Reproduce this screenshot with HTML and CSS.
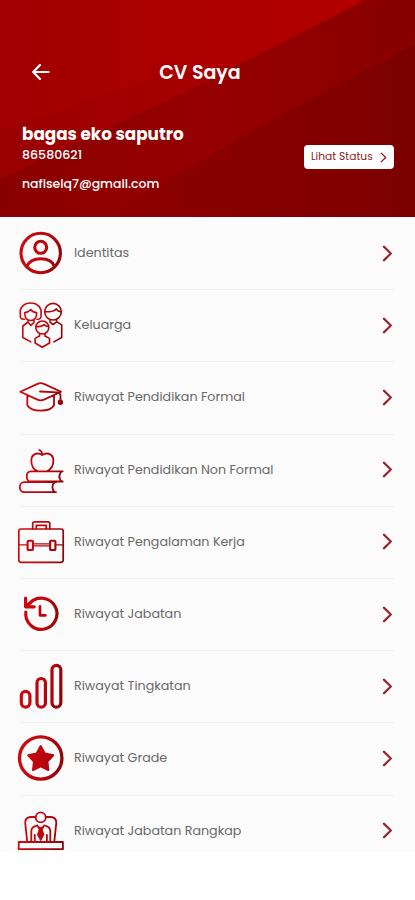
FILE: index.html
```html
<!DOCTYPE html>
<html lang="id">
<head>
<meta charset="utf-8">
<meta name="viewport" content="width=device-width, initial-scale=1">
<title>CV Saya</title>
<link rel="stylesheet" href="styles.css">
</head>
<body>
<svg class="defs" width="0" height="0" aria-hidden="true">
  <defs>
    <linearGradient id="red" gradientUnits="userSpaceOnUse" x1="2" y1="20" x2="46" y2="28">
      <stop offset="0" stop-color="#d00910"/><stop offset=".6" stop-color="#b8060c"/><stop offset="1" stop-color="#8a0508"/>
    </linearGradient>
    <symbol id="next" viewBox="0 0 12 18"><path d="M2 1.5 9.7 9 2 16.5"/></symbol>
  </defs>
</svg>
<header class="hero">
  <svg class="hero-bg" viewBox="0 0 415 217" preserveAspectRatio="none" aria-hidden="true">
    <defs>
      <linearGradient id="g1" x1="0" y1="0" x2="1" y2="0"><stop offset="0" stop-color="#a00000"/><stop offset=".45" stop-color="#ad0000"/><stop offset="1" stop-color="#b40000"/></linearGradient>
      <linearGradient id="g2" x1="0" y1="0" x2="1" y2="0"><stop offset="0" stop-color="#8a0000"/><stop offset=".5" stop-color="#960000"/><stop offset="1" stop-color="#880000"/></linearGradient>
      <linearGradient id="g3" gradientUnits="userSpaceOnUse" x1="100" y1="0" x2="415" y2="0"><stop offset="0" stop-color="#900000"/><stop offset="1" stop-color="#7c0000"/></linearGradient>
      <linearGradient id="g4" x1="0" y1="0" x2="1" y2="0"><stop offset="0" stop-color="#990000"/><stop offset="1" stop-color="#aa0000"/></linearGradient>
    </defs>
    <path fill="url(#g1)" d="M0 0H415V217H0z"/>
    <path fill="url(#g4)" d="M0 131 155 78 240 63 0 180z"/>
    <path fill="url(#g2)" d="M0 179 118 123 205 82 365 0H415V217H0z"/>
    <path fill="url(#g3)" d="M100 217 180 172 300 105 415 44V217z"/>
  </svg>
  <div class="bar">
    <svg class="back" viewBox="0 0 20 18"><path d="M17.6 9H2.4M9 2 2.2 9 9 16"/></svg>
    <h1>CV Saya</h1>
  </div>
  <div class="profile">
    <div class="person">
      <div class="name">bagas eko saputro</div>
      <div class="nik">86580621</div>
      <div class="mail">nafiselq7@gmail.com</div>
    </div>
    <div class="status"><span>Lihat Status</span><svg viewBox="0 0 12 18"><use href="#next"/></svg></div>
  </div>
</header>
<main class="list">
  <div class="row"><svg class="icon" viewBox="0 0 48 48"><g stroke-width="3.1"><circle cx="23.7" cy="24" r="19.7"/><circle cx="23.7" cy="18.3" r="6"/><path d="M9.8 37.5C12 32 17 29.7 23.7 29.7S35.5 32 37.6 37.5"/></g></svg><span>Identitas</span><svg class="next" viewBox="0 0 12 18"><use href="#next"/></svg></div>
  <div class="row"><svg class="icon" viewBox="0 0 48 48"><g stroke-width="1.6"><path d="M7.5 18.3C4 18.5 2.8 16.8 3.4 13.8 2 6.5 7 2 13.7 2S25.2 6.5 24 13.8c.5 3-.7 4.5-4.1 4.5"/><path d="M7.7 11.5c4.2 0 5-2 6-3 1.2 1.8 3 3 6 3 0 5-2.3 8-6 8s-6-3-6-8zM11 19v2.5l3 2.8 3-2.8V19M10.5 21.5 5.8 25v11.5l8 4.4"/><circle cx="36" cy="10.7" r="8.3"/><path d="M28 10.8c4 0 10-.4 11.2-3 1 1.8 2.5 2.8 5 3M33 18.8v2.4l3 2.3 3.5-2.3v-2.9M40 20.8l4.7 3v12.7l-7.8 4.4"/><circle cx="25.3" cy="26.5" r="6.5"/><path d="M19 25.5c5.3.5 7-.4 8-2 1 1.3 2.3 2 4.5 2M22.5 33v2l-4.4 2.4V42l7.2 4.2 7.2-4.2v-4.6L28 35v-2"/></g></svg><span>Keluarga</span><svg class="next" viewBox="0 0 12 18"><use href="#next"/></svg></div>
  <div class="row"><svg class="icon" viewBox="0 0 48 48"><g stroke-width="1.8"><path d="M3.3 18.8 20.5 10.9q3.2-1.6 6.4 0L44 18.8 27 26.6q-3.3 1.5-6.6 0zM10.3 22.5v9.8C12.5 36 18 37.7 23.7 37.7S35 36 37 32.3v-9.8M23 18.5l17.3.8q3.2.5 3.2 3.5v4"/><circle class="solid" cx="43.4" cy="29.2" r="1.8"/></g></svg><span>Riwayat Pendidikan Formal</span><svg class="next" viewBox="0 0 12 18"><use href="#next"/></svg></div>
  <div class="row"><svg class="icon" viewBox="0 0 48 48"><g stroke-width="1.8"><path d="M20.3 25c-4.8-2.3-6-6.2-6-10.3 0-6.5 5.8-9 10.9-5.7 5.2-3.3 11.2-.8 11.2 5.7 0 4.1-1.5 8-6.2 10.3M25.2 9c0-3-.8-4.3-3-5M45.7 25.3H13.8c-5.4 0-5.4 10.2 0 10.2h31.9M44.5 25.5c-3 3.5-3 6.7 0 10M39 36.2H7.3c-6 0-6 10 0 10H39M37.5 36.2c-2.8 3.2-2.8 6.7 0 10"/></g></svg><span>Riwayat Pendidikan Non Formal</span><svg class="next" viewBox="0 0 12 18"><use href="#next"/></svg></div>
  <div class="row"><svg class="icon" viewBox="0 0 48 48"><g stroke-width="1.7"><rect x="1.8" y="11" width="44.4" height="33.3" rx="2.2"/><path d="M15.7 11V5.8q0-2 2-2h13.1q2 0 2 2V11M19.3 10.5V7.4h10v3.1"/><path stroke-width="1.2" d="M2 26.8h8.2M16.3 25.8h16.5M16.3 27.9h16.5M38.8 26.8H46"/><g stroke-width="2.1"><rect x="10.6" y="22.7" width="5.3" height="9.3" rx=".8"/><rect x="33.1" y="22.7" width="5.3" height="9.3" rx=".8"/></g></g></svg><span>Riwayat Pengalaman Kerja</span><svg class="next" viewBox="0 0 12 18"><use href="#next"/></svg></div>
  <div class="row"><svg class="icon" viewBox="0 0 48 48"><g stroke-width="3.2"><path d="M8.8 22.2A15.6 15.6 0 1 0 12.5 13.6M8.6 8.2v8.6h8.6M9.5 16 15 11.2"/><path d="M23 16.3v9h5.4" stroke-width="2.7"/></g></svg><span>Riwayat Jabatan</span><svg class="next" viewBox="0 0 12 18"><use href="#next"/></svg></div>
  <div class="row"><svg class="icon" viewBox="0 0 48 48"><g stroke-width="3.2"><rect x="4.3" y="29.3" width="8.6" height="15.8" rx="4.3"/><rect x="20" y="16.5" width="8.4" height="28.6" rx="4.2"/><rect x="35" y="3.3" width="8.8" height="41.8" rx="4.4"/></g></svg><span>Riwayat Tingkatan</span><svg class="next" viewBox="0 0 12 18"><use href="#next"/></svg></div>
  <div class="row"><svg class="icon" viewBox="0 0 48 48"><circle cx="23.7" cy="24" r="21.2" stroke-width="3.3"/><path class="solid" d="m23.7 12 4.1 7.5 8.4 1.7-5.8 6.3 1 8.5-7.7-3.7L16 36l1-8.5-5.8-6.3 8.4-1.7z" stroke-width="2"/></svg><span>Riwayat Grade</span><svg class="next" viewBox="0 0 12 18"><use href="#next"/></svg></div>
  <div class="row"><svg class="icon" viewBox="0 0 48 48"><g stroke-width="1.8"><rect x="1.7" y="35" width="44.2" height="7.2"/><circle cx="23.7" cy="10.4" r="5"/><path d="M18.5 10h-5.3q-5 .8-5 5.7l2 19M29 10h5.3q5 .8 5 5.7l-2 19M14.3 35V24c0-3.3 2.4-5 6.2-5.7M33.3 35V24c0-3.3-2.4-5-6.2-5.7M17.8 34.5V28M29.9 34.5V28"/></g><path class="solid" d="m20 18.8 3.7 1.7 3.7-1.7-2 4 1.6 5-3.3 6-3.3-6 1.6-5z" stroke-width=".8"/></svg><span>Riwayat Jabatan Rangkap</span><svg class="next" viewBox="0 0 12 18"><use href="#next"/></svg></div>
</main>
</body>
</html>
```
FILE: styles.css
```css
* { box-sizing: border-box; }
body {
  margin: 0;
  background: #fff;
  font-family: Poppins, Inter, "Liberation Sans", sans-serif;
  color: #686868;
}
svg { display: block; fill: none; stroke-linecap: round; stroke-linejoin: round; flex: none; }
.defs { position: absolute; }
.hero { position: relative; height: 217px; color: #fff; overflow: hidden; }
.hero-bg { position: absolute; inset: 0; width: 100%; height: 100%; }
.bar {
  position: relative;
  display: grid;
  grid-template-columns: 20px 1fr 20px;
  align-items: center;
  padding: 57px 46px 0 31px;
  height: 87px;
}
.back { width: 20px; height: 18px; stroke: #fff; stroke-width: 2.2; }
h1 { margin: 0; padding-top: 2px; text-align: center; font-size: 19px; line-height: 28px; font-weight: 600; }
.profile {
  position: relative;
  display: flex;
  justify-content: space-between;
  padding: 36px 21px 0 22px;
}
.name { font-size: 16.8px; line-height: 22px; font-weight: 700; }
.nik { margin-top: 1px; font-size: 12.6px; line-height: 18px; font-weight: 500; }
.mail { margin-top: 11px; font-size: 12.45px; line-height: 18px; font-weight: 500; }
.status {
  display: flex;
  align-items: center;
  gap: 7px;
  width: 90px;
  height: 24px;
  margin-top: 22px;
  padding-left: 7px;
  border-radius: 4px;
  background: #fff;
  color: #8c1a24;
  font-size: 10.7px;
  white-space: nowrap;
}
.status svg { width: 7px; height: 11px; stroke: #8c1a24; stroke-width: 2.2; }
.list { height: 635px; overflow: hidden; background: #fbfbfb; padding: 0 21px 0 17px; }
.row {
  position: relative;
  display: flex;
  align-items: center;
  height: 72.2px;
  font-size: 12.7px;
  white-space: nowrap;
}
.row::after {
  content: "";
  position: absolute;
  left: 4px;
  right: 0;
  bottom: -1px;
  height: 1px;
  background: #f0f0f0;
}
.icon { width: 48px; height: 48px; margin-right: 9px; stroke: url(#red); }
.solid { fill: url(#red); }
.next { width: 11px; height: 17px; margin-left: auto; margin-right: 1px; stroke: #9b2226; stroke-width: 2.3; }
```
